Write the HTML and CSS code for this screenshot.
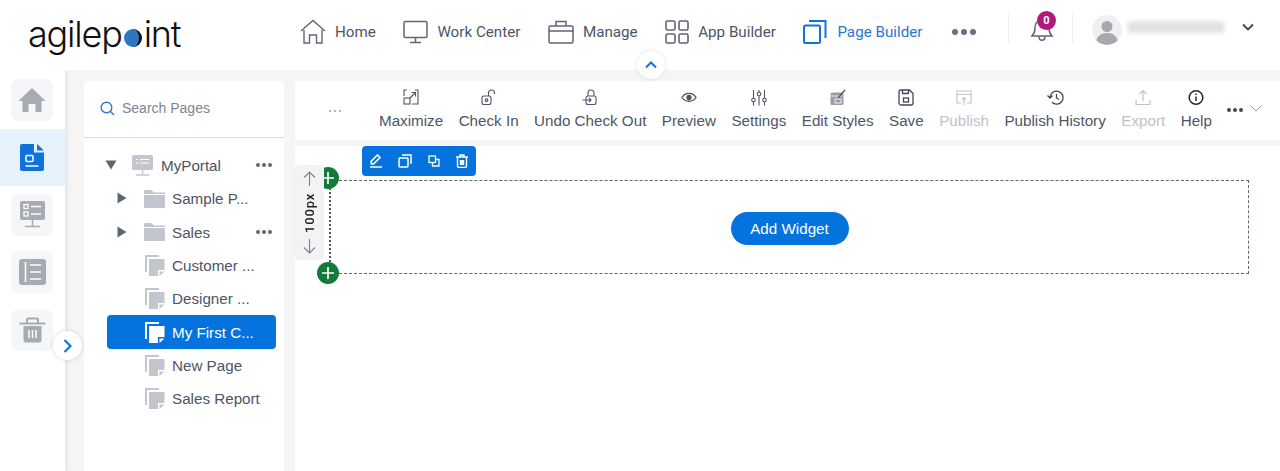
FILE: index.html
```html
<!DOCTYPE html>
<html lang="en">
<head>
  <meta charset="UTF-8" />
  <meta name="viewport" content="width=device-width, initial-scale=1" />
  <title>Page Builder</title>
  <link rel="stylesheet" href="styles.css">
</head>
<body>

  <header class="topbar">
    <div class="logo">agilep<span class="logo-dot"></span>int</div>

    <nav class="topnav">
      <a class="topnav-item">
        <svg width="26" height="26" viewBox="0 0 26 26" fill="none" stroke="#5f6675" stroke-width="1.4"><path d="M1 12 13 1.500 25 12"/><path d="M4 11v13h5.500v-8h7v8H22V11"/></svg>
        <span>Home</span>
      </a>
      <a class="topnav-item">
        <svg width="25" height="26" viewBox="0 0 25 26" fill="none" stroke="#5f6675" stroke-width="1.5"><rect x="1" y="2.500" width="23" height="16" rx="1.500"/><path d="M12.500 18.500v5M7 23.500h11"/></svg>
        <span>Work Center</span>
      </a>
      <a class="topnav-item">
        <svg width="26" height="26" viewBox="0 0 26 26" fill="none" stroke="#5f6675" stroke-width="1.5"><rect x="1" y="7" width="24" height="17" rx="1.500"/><path d="M1 12h24M8 7V2.500h10V7"/></svg>
        <span>Manage</span>
      </a>
      <a class="topnav-item">
        <svg width="24" height="24" viewBox="0 0 24 24" fill="none" stroke="#5f6675" stroke-width="1.6"><rect x="1" y="1" width="9" height="9" rx="1.500"/><rect x="14" y="1" width="9" height="9" rx="1.500"/><rect x="1" y="14" width="9" height="9" rx="1.500"/><rect x="14" y="14" width="9" height="9" rx="1.500"/></svg>
        <span>App Builder</span>
      </a>
      <a class="topnav-item active">
        <svg width="24" height="24" viewBox="0 0 24 24" fill="none" stroke="#0e73dc" stroke-width="2"><rect x="1" y="5.500" width="16" height="17.500" rx="1.500"/><path d="M6 1h16.500v17"/></svg>
        <span>Page Builder</span>
      </a>
      <div class="dots-big"><i></i><i></i><i></i></div>
    </nav>

    <div class="divider first"></div>
    <div class="bell">
      <svg width="24" height="28" viewBox="0 0 24 28" fill="none" stroke="#5f6675" stroke-width="1.5"><path d="M2 22c2-2 3-4 3-8 0-5 3-8 7-8s7 3 7 8c0 4 1 6 3 8z"/><path d="M9 22.500c0 5 6 5 6 0"/></svg>
      <span class="badge">0</span>
    </div>
    <div class="divider"></div>

    <div class="avatar">
      <svg width="30" height="30" viewBox="0 0 30 30"><circle cx="15" cy="11.500" r="5.500" fill="#a6a9b0"/><path d="M4 27c1-7 6-9 11-9s10 2 11 9c-3 2-7 3-11 3s-8-1-11-3z" fill="#a6a9b0"/></svg>
    </div>
    <div class="user-name"></div>
    <svg class="user-caret" width="12" height="8" viewBox="0 0 12 8" fill="none" stroke="#3a4150" stroke-width="1.800"><path d="M1 1.500 6 6.500 11 1.500"/></svg>

    <button class="collapse-btn">
      <svg width="12" height="8" viewBox="0 0 12 8" fill="none" stroke="#0e73dc" stroke-width="2"><path d="M1 6.500 6 1.500 11 6.500"/></svg>
    </button>
  </header>

  <div class="workspace">
    <aside class="rail">
      <div class="rail-row">
        <div class="rail-tile">
          <svg width="28" height="26" viewBox="0 0 28 26" fill="#a6abb4"><path d="M14 1 0.500 14h4v11h6v-8h7v8h6V14h4z"/></svg>
        </div>
      </div>
      <div class="rail-row active">
        <svg width="25" height="27" viewBox="0 0 25 27"><path d="M2 0h12v8.500h10V25a2 2 0 0 1-2 2H2a2 2 0 0 1-2-2V2a2 2 0 0 1 2-2z" fill="#0e73dc"/><path d="M17 0l7 6.500h-7z" fill="#0e73dc"/><rect x="6" y="11.500" width="7" height="6" rx="1" fill="none" stroke="#fff" stroke-width="1.500"/><path d="M5.500 22h13" stroke="#fff" stroke-width="1.500"/></svg>
      </div>
      <div class="rail-row">
        <div class="rail-tile">
          <svg width="25" height="27" viewBox="0 0 25 27"><rect width="25" height="19" rx="2" fill="#a6abb4"/><path d="M12.500 19v6M5 25.500h15" stroke="#a6abb4" stroke-width="1.500"/><g fill="none" stroke="#fff" stroke-width="1.300"><rect x="4" y="3.500" width="4" height="4"/><rect x="4" y="11" width="4" height="4"/><path d="M11 5.500h10M11 13h10"/></g></svg>
        </div>
      </div>
      <div class="rail-row">
        <div class="rail-tile">
          <svg width="27" height="26" viewBox="0 0 27 26"><rect width="27" height="26" rx="3" fill="#a6abb4"/><path d="M6.500 3v20M11 6h11M11 13h11M11 20h11" stroke="#fff" stroke-width="1.500"/></svg>
        </div>
      </div>
      <div class="rail-row">
        <div class="rail-tile">
          <svg width="27" height="26" viewBox="0 0 27 26"><path d="M0.500 6.500h26" stroke="#a6abb4" stroke-width="2"/><path d="M8 6V2.500a1 1 0 0 1 1-1h9a1 1 0 0 1 1 1V6" fill="none" stroke="#a6abb4" stroke-width="2"/><path d="M4.500 9h18v14a2.500 2.500 0 0 1-2.500 2.500H7A2.500 2.500 0 0 1 4.500 23z" fill="#a6abb4"/><path d="M10 13v8M13.500 13v8M17 13v8" stroke="#fff" stroke-width="1.500"/></svg>
        </div>
      </div>
      <button class="expand-btn">
        <svg width="9" height="14" viewBox="0 0 9 14" fill="none" stroke="#0e73dc" stroke-width="2.200"><path d="M1.500 1 7.500 7 1.500 13"/></svg>
      </button>
    </aside>

    <section class="tree-panel">
      <div class="search">
        <svg width="15" height="15" viewBox="0 0 15 15" fill="none" stroke="#2c78d4" stroke-width="1.400"><circle cx="6.500" cy="6.500" r="5.300"/><path d="M10.500 10.500 14 14"/></svg>
        <span>Search Pages</span>
      </div>

      <ul class="tree">
        <li class="tree-row root">
          <svg class="arrow" width="12" height="10" viewBox="0 0 12 10"><path d="M0.500 0.500h11L6 9.500z" fill="#5f6675"/></svg>
          <svg class="tree-icon" width="21" height="21" viewBox="0 0 21 21"><rect width="21" height="15" rx="1.500" fill="#c3c6cc"/><path d="M10.500 15v4.500M4 20h13" stroke="#c3c6cc" stroke-width="1.500"/><path d="M4 4.500h2M8 4.500h9M4 8h2M8 8h9" stroke="#fff" stroke-width="1.200"/></svg>
          <span class="tree-label">MyPortal</span>
          <div class="dots-small"><i></i><i></i><i></i></div>
        </li>
        <li class="tree-row folder">
          <svg class="arrow" width="10" height="12" viewBox="0 0 10 12"><path d="M0.500 0.500 9.500 6 0.500 11.500z" fill="#5f6675"/></svg>
          <svg class="tree-icon" width="21" height="18" viewBox="0 0 21 18"><path d="M0 1.500A1.500 1.500 0 0 1 1.500 0h6L10 2.500h11V4H0z" fill="#c3c6cc"/><path d="M0 5h21v13H0z" fill="#c3c6cc"/></svg>
          <span class="tree-label">Sample P...</span>
        </li>
        <li class="tree-row folder">
          <svg class="arrow" width="10" height="12" viewBox="0 0 10 12"><path d="M0.500 0.500 9.500 6 0.500 11.500z" fill="#5f6675"/></svg>
          <svg class="tree-icon" width="21" height="18" viewBox="0 0 21 18"><path d="M0 1.500A1.500 1.500 0 0 1 1.500 0h6L10 2.500h11V4H0z" fill="#c3c6cc"/><path d="M0 5h21v13H0z" fill="#c3c6cc"/></svg>
          <span class="tree-label">Sales</span>
          <div class="dots-small"><i></i><i></i><i></i></div>
        </li>
        <li class="tree-row page">
          <svg class="tree-icon" width="20" height="21" viewBox="0 0 20 21"><path d="M14 1H1v16" fill="none" stroke="#c3c6cc" stroke-width="2"/><path d="M4 4h15.500v11H13v6H4z" fill="#c3c6cc"/><path d="M14.500 16.500h5l-5 4.500z" fill="#c3c6cc"/></svg>
          <span class="tree-label">Customer ...</span>
        </li>
        <li class="tree-row page">
          <svg class="tree-icon" width="20" height="21" viewBox="0 0 20 21"><path d="M14 1H1v16" fill="none" stroke="#c3c6cc" stroke-width="2"/><path d="M4 4h15.500v11H13v6H4z" fill="#c3c6cc"/><path d="M14.500 16.500h5l-5 4.500z" fill="#c3c6cc"/></svg>
          <span class="tree-label">Designer ...</span>
        </li>
        <li class="tree-row page selected">
          <svg class="tree-icon" width="20" height="21" viewBox="0 0 20 21"><path d="M14 1H1v16" fill="none" stroke="#fff" stroke-width="2"/><path d="M4 4h15.500v11H13v6H4z" fill="#fff"/><path d="M14.500 16.500h5l-5 4.500z" fill="#fff"/></svg>
          <span class="tree-label">My First C...</span>
        </li>
        <li class="tree-row page">
          <svg class="tree-icon" width="20" height="21" viewBox="0 0 20 21"><path d="M14 1H1v16" fill="none" stroke="#c3c6cc" stroke-width="2"/><path d="M4 4h15.500v11H13v6H4z" fill="#c3c6cc"/><path d="M14.500 16.500h5l-5 4.500z" fill="#c3c6cc"/></svg>
          <span class="tree-label">New Page</span>
        </li>
        <li class="tree-row page">
          <svg class="tree-icon" width="20" height="21" viewBox="0 0 20 21"><path d="M14 1H1v16" fill="none" stroke="#c3c6cc" stroke-width="2"/><path d="M4 4h15.500v11H13v6H4z" fill="#c3c6cc"/><path d="M14.500 16.500h5l-5 4.500z" fill="#c3c6cc"/></svg>
          <span class="tree-label">Sales Report</span>
        </li>
      </ul>
    </section>

    <main class="main">
      <div class="toolbar">
        <div class="dots-faint"><i></i><i></i><i></i></div>

        <a class="tool">
          <svg width="16" height="17" viewBox="0 0 16 17" fill="none" stroke="#4d5566" stroke-width="1.100"><path d="M4 1H1v6M12 1h3v14h-6"/><rect x="1" y="9" width="6" height="6"/><path d="M7 9l5-5M8.500 3.500h4v4"/></svg>
          <span>Maximize</span>
        </a>
        <a class="tool">
          <svg width="16" height="17" viewBox="0 0 16 17" fill="none" stroke="#4d5566" stroke-width="1.100"><rect x="1" y="7" width="9" height="8.500" rx="2"/><circle cx="5.500" cy="11.200" r="1.300"/><path d="M7.500 7V4a3 3 0 0 1 6 0v1"/></svg>
          <span>Check In</span>
        </a>
        <a class="tool">
          <svg width="16" height="17" viewBox="0 0 16 17" fill="none" stroke="#4d5566" stroke-width="1.100"><rect x="4" y="7" width="10" height="8.500" rx="2"/><path d="M6 7V4a3 3 0 0 1 6 0v3M0.500 11H9M7 9l2 2-2 2"/></svg>
          <span>Undo Check Out</span>
        </a>
        <a class="tool">
          <svg width="16" height="17" viewBox="0 0 16 17" fill="none" stroke="#4d5566" stroke-width="1.300"><path d="M1 8.500c3-5.500 11-5.500 14 0-3 5-11 5-14 0z"/><circle cx="8" cy="8.500" r="2" fill="#4d5566"/></svg>
          <span>Preview</span>
        </a>
        <a class="tool">
          <svg width="16" height="17" viewBox="0 0 16 17" fill="none" stroke="#4d5566" stroke-width="1.100"><path d="M2.500 1v8M2.500 13v3.500M8 1v2M8 7v9.500M13.500 1v8M13.500 13v3.500"/><circle cx="2.500" cy="11" r="1.800"/><circle cx="8" cy="5" r="1.800"/><circle cx="13.500" cy="11" r="1.800"/></svg>
          <span>Settings</span>
        </a>
        <a class="tool">
          <svg width="16" height="17" viewBox="0 0 16 17"><rect x="0.500" y="3.500" width="13" height="12.500" rx="1.500" fill="#9a9ea8"/><path d="M1 7h11.500" stroke="#fff" stroke-width="0.800"/><path d="M8 9l7-8" stroke="#4d5566" stroke-width="1.300"/><rect x="5" y="10" width="6" height="4" fill="none" stroke="#fff" stroke-width="0.800"/></svg>
          <span>Edit Styles</span>
        </a>
        <a class="tool">
          <svg width="16" height="17" viewBox="0 0 16 17" fill="none" stroke="#3f4757" stroke-width="1.300"><path d="M1 3a2 2 0 0 1 2-2h8.500L15 4.500V14a2 2 0 0 1-2 2H3a2 2 0 0 1-2-2z"/><path d="M4.500 1v3.500h6V1"/><rect x="5.500" y="9" width="5" height="4"/></svg>
          <span>Save</span>
        </a>
        <a class="tool disabled">
          <svg width="16" height="17" viewBox="0 0 16 17" fill="none" stroke="#bfc2c8" stroke-width="1.100"><path d="M5 14H1V2h14v12h-4M1 5.500h14M8 16V8.500M6 10.500l2-2 2 2"/></svg>
          <span>Publish</span>
        </a>
        <a class="tool">
          <svg width="17" height="17" viewBox="0 0 17 17" fill="none" stroke="#3f4757" stroke-width="1.300"><path d="M3 8.500a6.500 6.500 0 1 1 2 4.800M0.500 6.500l2.500 2.500 2.500-2.500M9.500 5v4l2.500 1.500"/></svg>
          <span>Publish History</span>
        </a>
        <a class="tool disabled">
          <svg width="16" height="17" viewBox="0 0 16 17" fill="none" stroke="#bfc2c8" stroke-width="1.200"><path d="M8 12V1.500M4.500 5 8 1.500 11.500 5M1 11v4.500h14V11"/></svg>
          <span>Export</span>
        </a>
        <a class="tool">
          <svg width="16" height="17" viewBox="0 0 16 17" fill="none" stroke="#1f2937" stroke-width="1.500"><circle cx="8" cy="8.500" r="6.800"/><path d="M8 7.500v4.500M8 4.500v1.500"/></svg>
          <span>Help</span>
        </a>

        <div class="dots-small dark"><i></i><i></i><i></i></div>
        <svg class="tool-caret" width="12" height="7" viewBox="0 0 12 7" fill="none" stroke="#9a9ea8" stroke-width="1"><path d="M0.500 0.500 6 6 11.500 0.500"/></svg>
      </div>

      <div class="canvas">
        <div class="section">
          <button class="add-widget">Add Widget</button>
        </div>

        <div class="section-tools">
          <svg width="14" height="14" viewBox="0 0 14 14" fill="none" stroke="#fff" stroke-width="1.600"><path d="M2.500 10 2 7.500 8.500 1l2.500 2.500L4.500 10zM1 13h12"/></svg>
          <svg width="14" height="14" viewBox="0 0 14 14" fill="none" stroke="#fff" stroke-width="1.500"><rect x="1" y="4" width="9" height="9" rx="1"/><path d="M4 1h9v9"/></svg>
          <svg width="12" height="12" viewBox="0 0 12 12" fill="none" stroke="#fff" stroke-width="1.300"><rect x="1" y="1" width="6.500" height="6.500"/><path d="M7.500 4.500H11V11H4.500V7.500"/></svg>
          <svg width="14" height="14" viewBox="0 0 14 14" fill="none" stroke="#fff" stroke-width="1.400"><path d="M1 3h12M5 3V1h4v2M2.500 3v9a1.500 1.500 0 0 0 1.500 1.500h6a1.500 1.500 0 0 0 1.500-1.500V3M5.500 6v5M7 6v5M8.500 6v5"/></svg>
        </div>

        <div class="plus top">
          <svg width="14" height="14" viewBox="0 0 14 14" stroke="#fff" stroke-width="1.700"><path d="M7 1v12M1 7h12"/></svg>
        </div>
        <div class="plus bottom">
          <svg width="14" height="14" viewBox="0 0 14 14" stroke="#fff" stroke-width="1.700"><path d="M7 1v12M1 7h12"/></svg>
        </div>

        <div class="height-handle">
          <svg width="13" height="15" viewBox="0 0 13 15" fill="none" stroke="#7a8190" stroke-width="1.100"><path d="M6.500 15V1M1 6.500 6.500 1 12 6.500"/></svg>
          <span>100px</span>
          <svg width="13" height="15" viewBox="0 0 13 15" fill="none" stroke="#7a8190" stroke-width="1.100"><path d="M6.500 0v14M1 8.500 6.500 14 12 8.500"/></svg>
        </div>
      </div>
    </main>
  </div>

</body>
</html>
```

FILE: styles.css
```css
* {
  box-sizing: border-box;
}
body {
  margin: 0;
  height: 471px;
  overflow: hidden;
  font-family: 'Liberation Sans', Arial, sans-serif;
  background-color: #f5f5f6;
  color: #4d5566;
}
svg {
  display: block;
  flex-shrink: 0;
}
button {
  border: none;
  padding: 0;
  font-family: inherit;
  cursor: pointer;
}

/* top bar */
.topbar {
  position: relative;
  z-index: 2;
  height: 70px;
  background-color: white;
  display: flex;
  align-items: center;
}
.logo {
  width: 272px;
  margin-left: 28px;
  font-family: Inter, sans-serif;
  font-size: 36px;
  font-weight: 300;
  letter-spacing: -1.2px;
  line-height: 1;
  color: #111;
  margin-top: -2px;
}
.logo-dot {
  display: inline-block;
  width: 18px;
  height: 18px;
  border-radius: 50%;
  background-color: #2f76c2;
  border-right: 3px solid #111;
  margin: 0 2px;
}
.topnav {
  display: flex;
  align-items: center;
  margin-bottom: 6px;
}
.topnav-item {
  display: flex;
  align-items: center;
  gap: 9px;
  margin-right: 27.5px;
  font-family: Roboto, sans-serif;
  font-size: 15.2px;
  color: #4d5566;
}
.topnav-item.active {
  gap: 10px;
  color: #2a76d2;
}
.dots-big {
  display: flex;
  gap: 3px;
  margin-left: 2px;
}
.dots-big i {
  width: 6px;
  height: 6px;
  border-radius: 50%;
  background-color: #6a7080;
}
.divider {
  width: 1px;
  height: 30px;
  margin-bottom: 12px;
  background-color: #eceef1;
}
.divider.first {
  margin-left: 32px;
}
.bell {
  position: relative;
  margin: 0 18px 14px 21px;
}
.badge {
  position: absolute;
  top: -3px;
  left: 7px;
  width: 19px;
  height: 19px;
  border-radius: 50%;
  background-color: #b01a7c;
  color: white;
  font-family: Roboto, sans-serif;
  font-size: 11px;
  font-weight: bold;
  text-align: center;
  line-height: 19px;
}
.avatar {
  width: 30px;
  height: 30px;
  margin: 0 0 11px 19px;
  border-radius: 50%;
  background-color: #eff0f3;
  overflow: hidden;
}
.user-name {
  width: 96px;
  height: 12px;
  margin: 0 0 17px 6px;
  background-color: #e2e2e2;
  filter: blur(2px);
}
.user-caret {
  margin: 0 0 16px 18px;
}
.collapse-btn {
  position: absolute;
  left: 637px;
  top: 51px;
  width: 28px;
  height: 28px;
  border-radius: 50%;
  background-color: white;
  box-shadow: 0 0 4px rgba(0,0,0,0.12);
  display: flex;
  align-items: center;
  justify-content: center;
}

/* main area */
.workspace {
  display: flex;
  height: 401px;
}
.rail {
  position: relative;
  width: 65px;
  flex-shrink: 0;
  padding-top: 1px;
  background-color: white;
  box-shadow: 2px 0 4px rgba(120,100,100,0.12);
}
.rail-row {
  height: 57.5px;
  display: flex;
  align-items: center;
  justify-content: center;
}
.rail-row.active {
  background-color: #e6f2fc;
}
.rail-tile {
  width: 42px;
  height: 42px;
  margin-right: 1px;
  border-radius: 8px;
  background-color: #f5f6f8;
  display: flex;
  align-items: center;
  justify-content: center;
}
.expand-btn {
  position: absolute;
  left: 53px;
  top: 261px;
  width: 29px;
  height: 29px;
  border-radius: 50%;
  background-color: white;
  box-shadow: 0 0 4px rgba(0,0,0,0.15);
  display: flex;
  align-items: center;
  justify-content: center;
}
.tree-panel {
  width: 200px;
  flex-shrink: 0;
  margin: 11px 11px 0 19px;
  background-color: white;
  border-radius: 4px 4px 0 0;
}
.search {
  height: 57px;
  padding: 0 0 2px 16px;
  border-bottom: 1px solid #d9dbe3;
  display: flex;
  align-items: center;
  gap: 7px;
  font-size: 14px;
  color: #7d8494;
}
.tree {
  list-style: none;
  margin: 11px 8px 0 23px;
  padding: 0;
}
.tree-row {
  position: relative;
  height: 33.3px;
  display: flex;
  align-items: center;
  font-size: 15.2px;
  color: #4d5566;
}
.tree-row .arrow {
  position: absolute;
}
.tree-row.root .arrow {
  left: -2px;
  top: 11px;
}
.tree-row.root .tree-icon {
  margin-left: 25px;
}
.tree-row.root .tree-label {
  margin-left: 8px;
}
.tree-row.folder .arrow {
  left: 10px;
  top: 10px;
}
.tree-row.folder .tree-icon {
  margin-left: 37px;
}
.tree-row.folder .tree-label {
  margin-left: 7px;
}
.tree-row.page .tree-icon {
  margin-left: 38px;
}
.tree-row.page .tree-label {
  margin-left: 7px;
}
.tree-row.selected {
  border-radius: 4px;
  background-color: #0573de;
  color: white;
}
.tree-row .dots-small {
  position: absolute;
  right: 4px;
  top: 14px;
}
.dots-small {
  display: flex;
  gap: 2px;
}
.dots-small i {
  width: 4px;
  height: 4px;
  border-radius: 50%;
  background-color: #5f6675;
}

/* toolbar */
.main {
  flex: 1;
  min-width: 0;
  margin-top: 11px;
  display: flex;
  flex-direction: column;
  gap: 6px;
}
.toolbar {
  height: 59px;
  padding-left: 34px;
  background-color: white;
  display: flex;
  align-items: center;
}
.dots-faint {
  display: flex;
  gap: 3px;
  width: 50px;
}
.dots-faint i {
  width: 2px;
  height: 2px;
  border-radius: 50%;
  background-color: #9a9ea8;
}
.tool {
  margin: 0 15.5px 3px 0;
  display: flex;
  flex-direction: column;
  align-items: center;
  gap: 6px;
  font-size: 15.2px;
  white-space: nowrap;
}
.tool.disabled {
  color: #bfc2c8;
}
.dots-small.dark {
  margin-top: -2px;
}
.dots-small.dark i {
  background-color: #3f4757;
}
.tool-caret {
  margin: -4px 0 0 7px;
}

/* canvas */
.canvas {
  position: relative;
  flex: 1;
  background-color: white;
  padding: 34px 31px 0 34px;
}
.section {
  height: 94px;
  border: 1px dashed #5f6675;
  border-left: 2px dotted #4d5566;
  display: flex;
  align-items: center;
  justify-content: center;
}
.add-widget {
  width: 118px;
  height: 33px;
  margin-top: 3px;
  border-radius: 17px;
  background-color: #0573de;
  color: white;
  font-size: 15.2px;
}
.section-tools {
  position: absolute;
  left: 67px;
  top: 0;
  width: 114px;
  height: 30px;
  padding: 0 7px;
  border-radius: 4px;
  background-color: #0573de;
  display: flex;
  align-items: center;
  justify-content: space-between;
}
.plus {
  position: absolute;
  left: 22px;
  width: 22px;
  height: 22px;
  border-radius: 50%;
  background-color: #137a3a;
  display: flex;
  align-items: center;
  justify-content: center;
}
.plus.top {
  top: 21px;
}
.plus.bottom {
  top: 116px;
}
.height-handle {
  position: absolute;
  left: 0;
  top: 19px;
  width: 29px;
  height: 95px;
  border-radius: 3px;
  background-color: #f2f3f5;
  padding: 6px 0;
  display: flex;
  flex-direction: column;
  align-items: center;
  justify-content: space-between;
}
.height-handle span {
  writing-mode: vertical-rl;
  transform: rotate(180deg);
  font-family: Roboto, sans-serif;
  font-size: 13px;
  font-weight: 500;
  color: #222;
  letter-spacing: 0.8px;
}
```
